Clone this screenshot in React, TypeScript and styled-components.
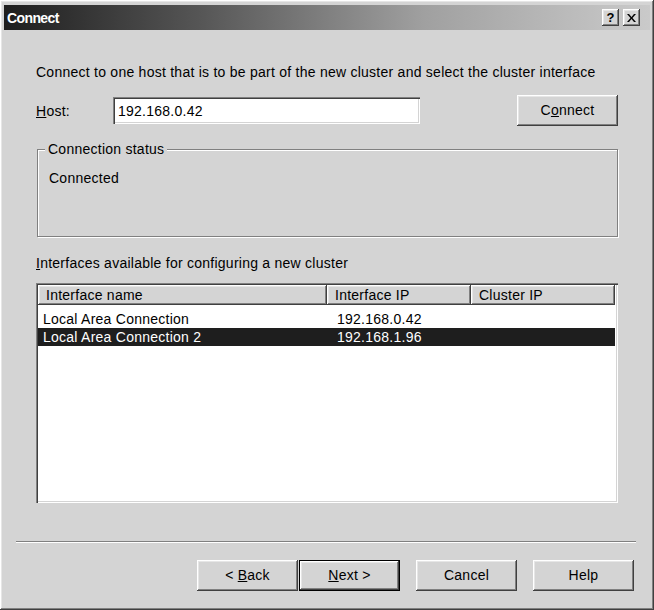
import styled, { createGlobalStyle } from "styled-components";

const GlobalStyle = createGlobalStyle`
  html, body {
    margin: 0;
    padding: 0;
    background: #d4d4d4;
  }
  body {
    font-family: "Liberation Sans", Arial, sans-serif;
    font-size: 14px;
    letter-spacing: 0.25px;
    color: #000;
  }
`;

// classic 3D bevels
const raised = `
  box-shadow: inset -1px -1px 0 #404040, inset 1px 1px 0 #ffffff,
    inset -2px -2px 0 #808080, inset 2px 2px 0 #e6e6e6;
`;

const sunken = `
  box-shadow: inset 1px 1px 0 #808080, inset 2px 2px 0 #404040,
    inset -1px -1px 0 #ffffff, inset -2px -2px 0 #d4d4d4;
`;

const columns = [
  { key: "name", label: "Interface name", width: 289 },
  { key: "ip", label: "Interface IP", width: 144 },
  { key: "cluster", label: "Cluster IP", width: 144 },
];

const interfaces = [
  { name: "Local Area Connection", ip: "192.168.0.42", cluster: "" },
  { name: "Local Area Connection 2", ip: "192.168.1.96", cluster: "" },
];

const App = () => {
  const selected = 1;

  return (
    <>
      <GlobalStyle />
      <Window>
        <TitleBar>
          <Title>Connect</Title>
          <CaptionButtons>
            <CaptionButton>?</CaptionButton>
            <CaptionButton>
              <svg width="9" height="8" viewBox="0 0 9 8">
                <path d="M0 0h2l2.5 3 2.5-3h2L5.5 4 9 8H7L4.5 5 2 8H0l3.5-4z" fill="#000" />
              </svg>
            </CaptionButton>
          </CaptionButtons>
        </TitleBar>

        <Content>
          <Intro>
            Connect to one host that is to be part of the new cluster and select the cluster interface
          </Intro>

          <HostRow>
            <HostLabel>
              <u>H</u>ost:
            </HostLabel>
            <TextBox>192.168.0.42</TextBox>
            <Spacer />
            <PushButton>
              C<u>o</u>nnect
            </PushButton>
          </HostRow>

          <GroupBox>
            <Legend>Connection status</Legend>
            <StatusText>Connected</StatusText>
          </GroupBox>

          <ListLabel>
            <u>I</u>nterfaces available for configuring a new cluster
          </ListLabel>

          <ListBox>
            <HeaderRow>
              {columns.map((c) => (
                <HeaderCell key={c.key} $width={c.width}>
                  {c.label}
                </HeaderCell>
              ))}
            </HeaderRow>
            <Rows>
              {interfaces.map((row, i) => (
                <Row key={row.name} $selected={i === selected}>
                  <Cell $width={columns[0].width} $first>
                    {row.name}
                  </Cell>
                  <Cell $width={columns[1].width}>{row.ip}</Cell>
                  <Cell $width={columns[2].width}>{row.cluster}</Cell>
                </Row>
              ))}
            </Rows>
          </ListBox>
        </Content>

        <Footer>
          <Separator />
          <ButtonRow>
            <WizardPair>
              <PushButton>
                &lt; <u>B</u>ack
              </PushButton>
              <PushButton $default>
                <u>N</u>ext &gt;
              </PushButton>
            </WizardPair>
            <PushButton>Cancel</PushButton>
            <PushButton>Help</PushButton>
          </ButtonRow>
        </Footer>
      </Window>
    </>
  );
};

export default App;

const Window = styled.div`
  width: 654px;
  height: 610px;
  box-sizing: border-box;
  padding: 5px 4px 4px 4px;
  display: flex;
  flex-direction: column;
  background: #d4d4d4;
  ${raised}
`;

const TitleBar = styled.div`
  height: 25px;
  display: flex;
  align-items: center;
  padding: 0 10px 0 3px;
  background: linear-gradient(90deg, #1e1e1e 0%, #555555 30%, #a0a0a0 65%, #cacaca 100%);
`;

const Title = styled.span`
  color: #fff;
  font-weight: bold;
  font-size: 14px;
  letter-spacing: -0.6px;
`;

const CaptionButtons = styled.div`
  margin-left: auto;
  display: flex;
  gap: 4px;
`;

const CaptionButton = styled.div`
  width: 17px;
  height: 17px;
  display: flex;
  align-items: center;
  justify-content: center;
  background: #d4d4d4;
  font-weight: bold;
  font-size: 13px;
  line-height: 1;
  letter-spacing: 0;
  ${raised}
`;

const Content = styled.div`
  display: flex;
  flex-direction: column;
  padding: 34px 32px 0;
`;

const Intro = styled.div`
  line-height: 16px;
  white-space: nowrap;
`;

const HostRow = styled.div`
  margin-top: 15px;
  height: 31px;
  display: flex;
  align-items: center;
`;

const HostLabel = styled.span`
  width: 77px;
`;

const TextBox = styled.div`
  width: 307px;
  height: 27px;
  box-sizing: border-box;
  padding: 0 5px;
  display: flex;
  align-items: center;
  background: #fff;
  ${sunken}
`;

const Spacer = styled.div`
  flex: 1;
`;

const PushButton = styled.div<{ $default?: boolean }>`
  width: 101px;
  height: 31px;
  box-sizing: border-box;
  line-height: ${(p) => (p.$default ? 29 : 31)}px;
  text-align: center;
  white-space: pre;
  background: #d4d4d4;
  ${raised}
  ${(p) => (p.$default ? "border: 1px solid #000;" : "")}
`;

const GroupBox = styled.div`
  position: relative;
  margin: 23px 0 0 1px;
  height: 88px;
  box-sizing: border-box;
  padding: 20px 11px 0;
  border: 1px solid #808080;
  box-shadow: 1px 1px 0 #fff, inset 1px 1px 0 #fff;
`;

const Legend = styled.span`
  position: absolute;
  top: -9px;
  left: 7px;
  padding: 0 3px;
  line-height: 16px;
  background: #d4d4d4;
`;

const StatusText = styled.div`
  line-height: 16px;
`;

const ListLabel = styled.div`
  margin-top: 18px;
  line-height: 16px;
`;

const ListBox = styled.div`
  margin-top: 12px;
  height: 220px;
  box-sizing: border-box;
  padding: 2px;
  background: #fff;
  ${sunken}
`;

const HeaderRow = styled.div`
  display: flex;
  height: 20px;
`;

const HeaderCell = styled.div<{ $width: number }>`
  width: ${(p) => p.$width}px;
  box-sizing: border-box;
  padding-left: 8px;
  display: flex;
  align-items: center;
  background: #d4d4d4;
  ${raised}
`;

const Rows = styled.div`
  padding-top: 5px;
`;

const Row = styled.div<{ $selected?: boolean }>`
  display: flex;
  height: 18px;
  align-items: center;
  width: 577px;
  background: ${(p) => (p.$selected ? "#1e1e1e" : "transparent")};
  color: ${(p) => (p.$selected ? "#fff" : "#000")};
`;

const Cell = styled.div<{ $width: number; $first?: boolean }>`
  width: ${(p) => p.$width}px;
  box-sizing: border-box;
  padding-left: ${(p) => (p.$first ? 5 : 10)}px;
  white-space: nowrap;
`;

const Footer = styled.div`
  margin-top: auto;
  padding: 0 14px 15px 12px;
`;

const Separator = styled.div`
  height: 1px;
  background: #808080;
  border-bottom: 1px solid #fff;
`;

const ButtonRow = styled.div`
  margin-top: 17px;
  display: flex;
  justify-content: flex-end;
  gap: 16px;
  padding-right: 2px;
`;

const WizardPair = styled.div`
  display: flex;
  gap: 1px;
`;
